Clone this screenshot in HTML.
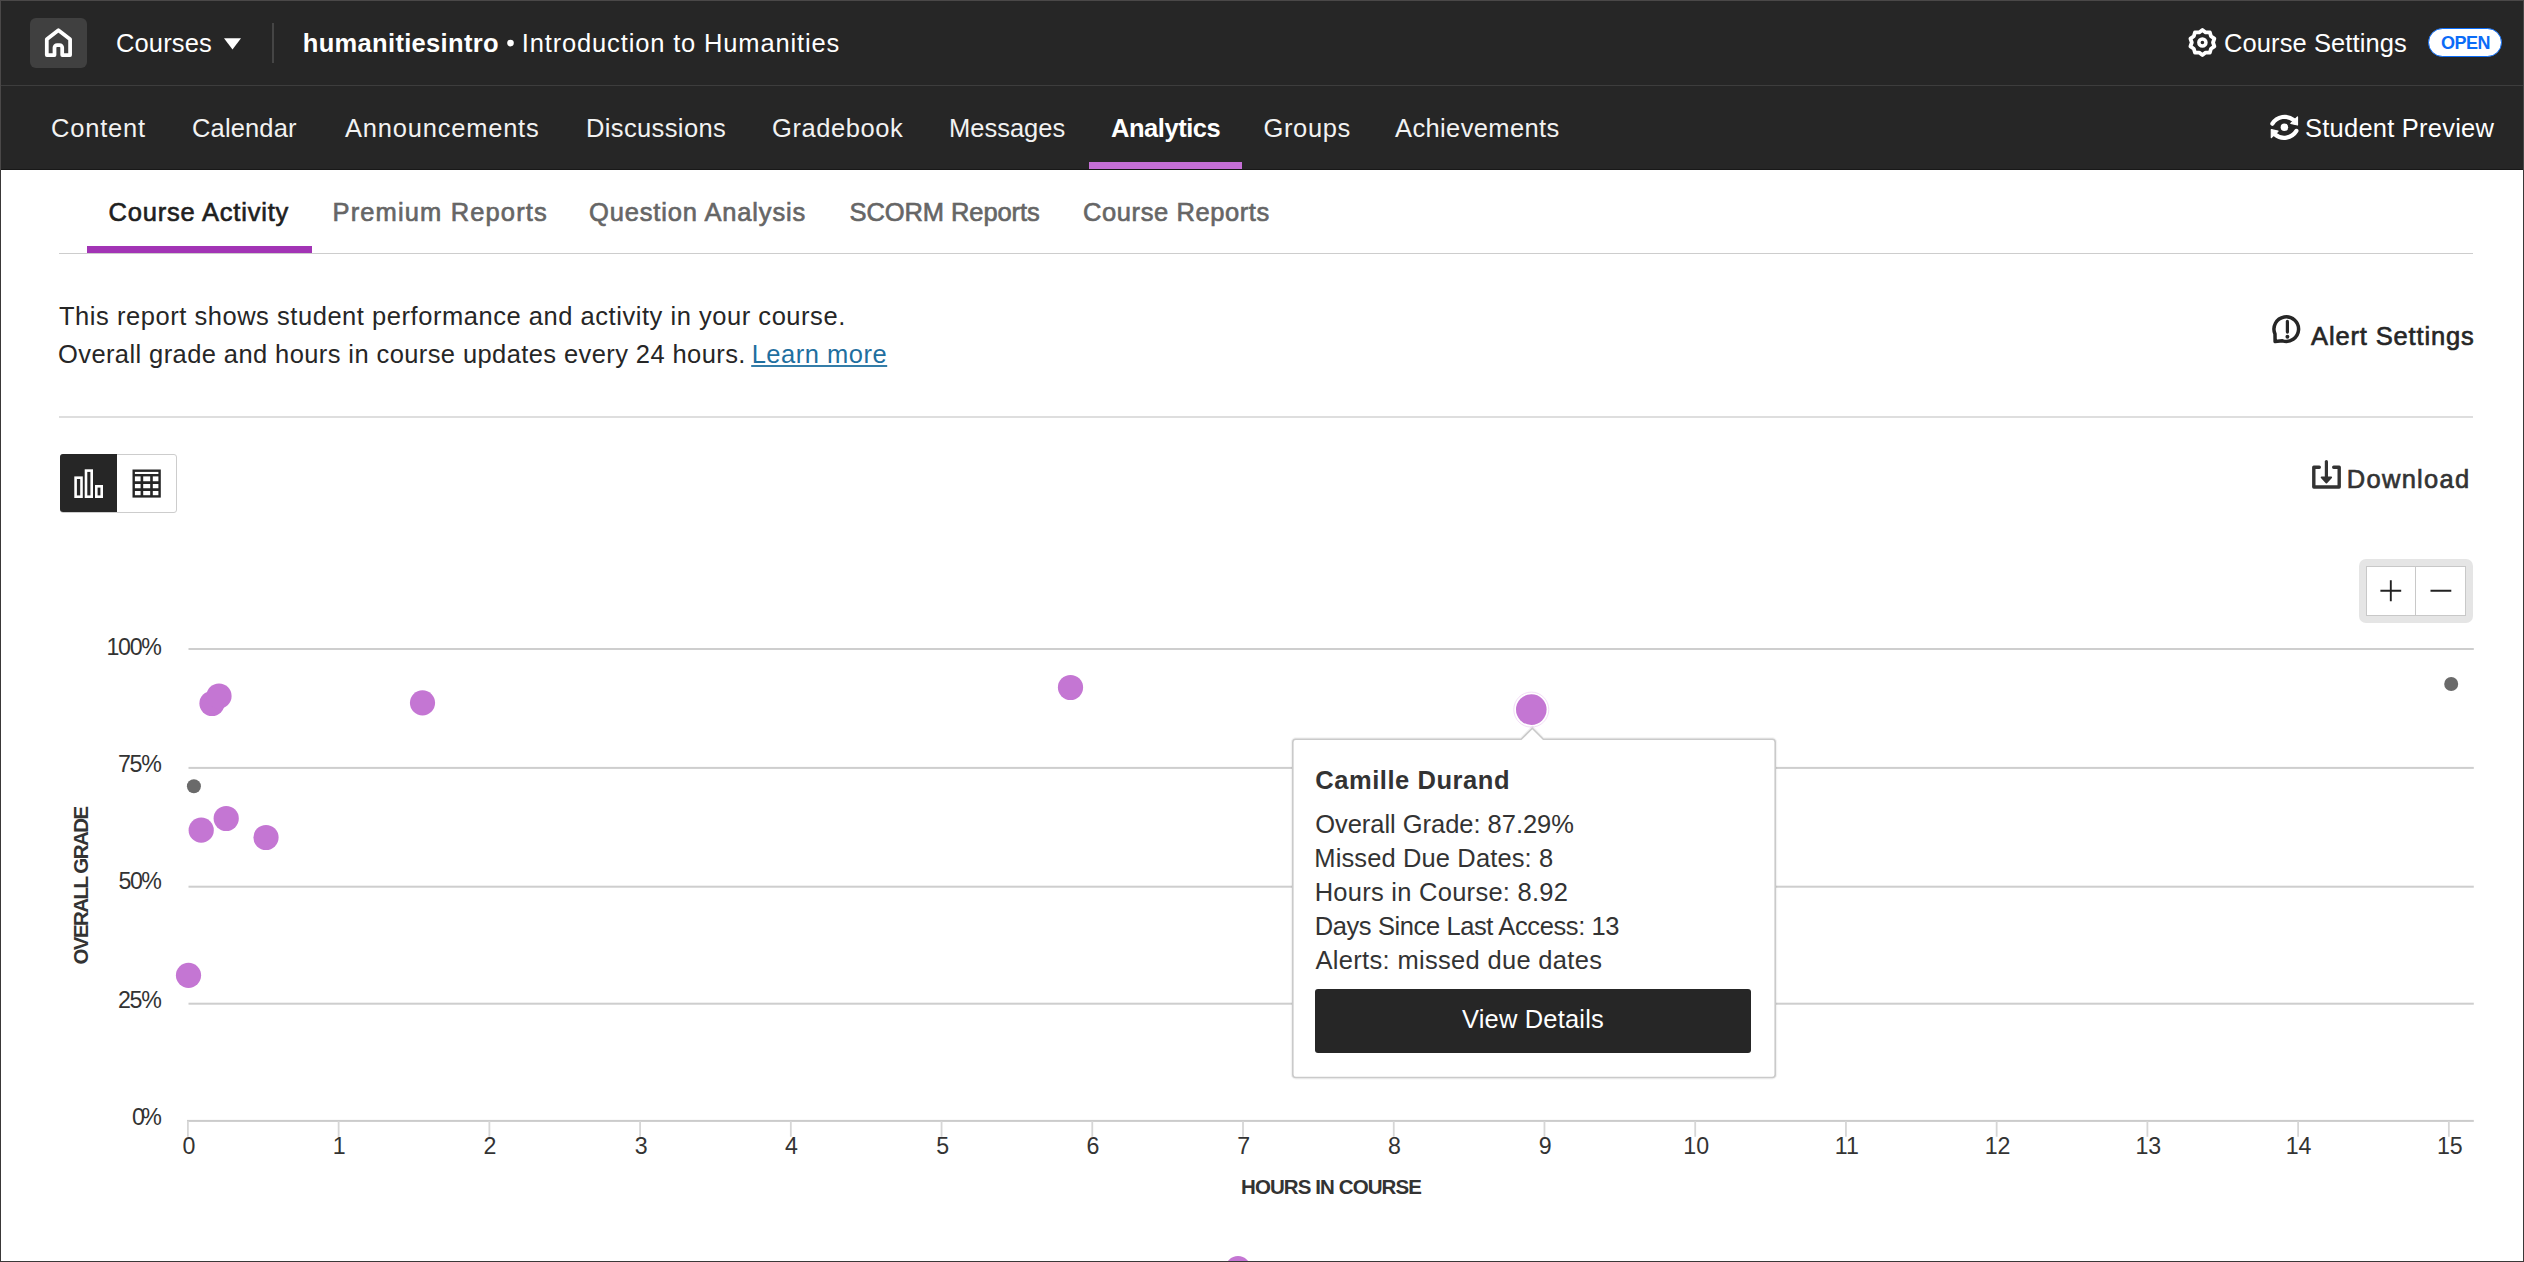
<!DOCTYPE html>
<html><head><meta charset="utf-8"><title>Course Activity</title>
<style>
html,body{margin:0;padding:0;background:#fff;}
body{width:2524px;height:1262px;overflow:hidden;font-family:"Liberation Sans",sans-serif;}
#page{position:relative;width:2524px;height:1262px;overflow:hidden;background:#fff;}
.t{position:absolute;white-space:nowrap;line-height:1;font-family:"Liberation Sans",sans-serif;}
.a{position:absolute;}
svg{position:absolute;overflow:visible;}

</style></head>
<body>
<div id="page">
<div class="a" style="left:0;top:0;width:2524px;height:170px;background:#262626"></div>
<div class="a" style="left:0;top:85px;width:2524px;height:1px;background:#3d3d3d"></div>
<div class="a" style="left:0;top:0;width:2524px;height:1px;background:#4a4848"></div>
<div class="a" style="left:0;top:169px;width:2524px;height:1px;background:#181818"></div>
<div class="a" style="left:0;top:0;width:1px;height:170px;background:#4a4848"></div>
<div class="a" style="left:30px;top:18px;width:57px;height:50px;border-radius:6px;background:#404040"></div>
<svg style="left:0;top:0" width="100" height="80"><path d="M54.5 55 H46.8 V39.3 L58.4 30.2 L70.1 39.3 V55 H62.2 V47.6 a2.6 2.6 0 0 0 -2.6 -2.6 h-2.5 a2.6 2.6 0 0 0 -2.6 2.6 Z" fill="none" stroke="#fff" stroke-width="3.75" stroke-linejoin="round"/></svg>
<svg style="left:224px;top:37.5px" width="17" height="12" viewBox="0 0 17 12"><path d="M0 0.3 H17 L8.5 11.4 Z" fill="#fff"/></svg>
<div class="a" style="left:272px;top:23px;width:2px;height:40px;background:#454545"></div>
<svg style="left:0;top:0" width="600" height="80"><circle cx="510.5" cy="43.1" r="3.3" fill="#fff"/></svg>
<svg style="left:0;top:0" width="2524" height="90"><path d="M2202.40 29.90 L2205.68 32.42 L2209.81 32.31 L2210.98 36.27 L2214.38 38.61 L2213.00 42.50 L2214.38 46.39 L2210.98 48.73 L2209.81 52.69 L2205.68 52.58 L2202.40 55.10 L2199.12 52.58 L2194.99 52.69 L2193.82 48.73 L2190.42 46.39 L2191.80 42.50 L2190.42 38.61 L2193.82 36.27 L2194.99 32.31 L2199.12 32.42 Z" fill="none" stroke="#fff" stroke-width="3.8" stroke-linejoin="round"/><circle cx="2202.4" cy="42.5" r="3.55" fill="none" stroke="#fff" stroke-width="3.5"/></svg>
<div class="a" style="left:2428px;top:28px;width:73.5px;height:28.5px;border-radius:15px;background:#fff;box-sizing:border-box;border:1.5px solid #0b6cf7"></div>
<svg style="left:0;top:0" width="2524" height="170"><g transform="translate(2284.4 127.3)"><path d="M-12.0 -3.6 A14.35 14.35 0 0 1 9.5 -7.1" fill="none" stroke="#fff" stroke-width="4.2" stroke-linecap="round"/><path d="M13.1 -10.3 V-2.3 L6.4 -3.9 Z" fill="#fff" stroke="#fff" stroke-width="1.2" stroke-linejoin="round"/><g transform="rotate(180)"><path d="M-12.0 -3.6 A14.35 14.35 0 0 1 9.5 -7.1" fill="none" stroke="#fff" stroke-width="4.2" stroke-linecap="round"/><path d="M13.1 -10.3 V-2.3 L6.4 -3.9 Z" fill="#fff" stroke="#fff" stroke-width="1.2" stroke-linejoin="round"/></g><circle cx="0" cy="0" r="3.75" fill="#fff"/></g></svg>
<div class="a" style="left:1089px;top:162px;width:153px;height:7px;background:#c56fd6"></div>
<div class="a" style="left:59px;top:253px;width:2414px;height:1px;background:#cdcdcd"></div>
<div class="a" style="left:87px;top:246px;width:225px;height:7px;background:#a234b5"></div>
<div class="a" style="left:59px;top:416px;width:2414px;height:2px;background:#dedede"></div>
<svg style="left:0;top:0" width="1000" height="400"><rect x="751.2" y="365.1" width="136" height="1.8" fill="#1f6f9f"/></svg>
<svg style="left:0;top:0" width="2524" height="400"><path d="M2275.1 341.6 L2275.0 334 A12.3 12.3 0 1 1 2282.5 340.8 Z" fill="none" stroke="#262626" stroke-width="3.5" stroke-linejoin="round"/><path d="M2287.4 321.4 V332.1" stroke="#262626" stroke-width="3.2" stroke-linecap="round"/><circle cx="2287.4" cy="336.7" r="1.95" fill="#262626"/></svg>
<div class="a" style="left:59.5px;top:454px;width:117px;height:58.6px;border-radius:3px;border:1px solid #cdcdcd;box-sizing:border-box;background:#fff"></div>
<div class="a" style="left:59.5px;top:454px;width:57.4px;height:58px;border-radius:3px 0 0 3px;background:#262626"></div>
<svg style="left:0;top:0" width="300" height="520"><g fill="none" stroke="#fff" stroke-width="2.6">
<rect x="75.6" y="477.7" width="5.9" height="19"/><rect x="86" y="470.6" width="5.7" height="26.1"/><rect x="96.3" y="486.3" width="5.4" height="10.4"/></g>
<g fill="none" stroke="#262626"><rect x="133.7" y="470.7" width="25.9" height="25.7" stroke-width="2.4"/>
<path d="M133 475.2 H160" stroke-width="2.4"/><path d="M133 482.6 H160 M133 489.7 H160" stroke-width="2.8"/><path d="M141.9 475 V497 M151.5 475 V497" stroke-width="2.6"/></g></svg>
<svg style="left:0;top:0" width="2524" height="520"><path d="M2319.3 467.2 H2313.8 V487 H2339.2 V467.2 H2333.7" fill="none" stroke="#333" stroke-width="3.4" stroke-linecap="round" stroke-linejoin="round"/>
<path d="M2326.4 461.6 V479" stroke="#333" stroke-width="3.2" stroke-linecap="round"/><path d="M2321.6 477.3 H2331.2 L2326.4 482.6 Z" fill="#333" stroke="#333" stroke-width="1.8" stroke-linejoin="round"/></svg>
<div class="a" style="left:2359px;top:559px;width:114px;height:63.5px;border-radius:7px;background:#e5e5e5"></div>
<div class="a" style="left:2366px;top:566px;width:100px;height:49.5px;background:#fff;border:1px solid #c8c8c8;box-sizing:border-box"></div>
<div class="a" style="left:2415px;top:566px;width:1px;height:49px;background:#c8c8c8"></div>
<svg style="left:0;top:0" width="2524" height="640"><path d="M2380.4 590.8 H2401.2 M2390.8 580.3 V601.3 M2430.5 590.8 H2451.3" stroke="#222" stroke-width="1.9" fill="none"/></svg>
<svg style="left:0;top:0" width="2524" height="1262">
<rect x="188.5" y="648.0" width="2285.3" height="2" fill="#cecece"/>
<rect x="188.5" y="766.9" width="2285.3" height="2" fill="#cecece"/>
<rect x="188.5" y="885.7" width="2285.3" height="2" fill="#cecece"/>
<rect x="188.5" y="1002.7" width="2285.3" height="2" fill="#cecece"/>
<rect x="187" y="1119.9" width="2286.8" height="2" fill="#cbcbcb"/>
<rect x="187.00" y="1121" width="1.8" height="15.8" fill="#d6d6d6"/>
<rect x="337.73" y="1121" width="1.8" height="15.8" fill="#d6d6d6"/>
<rect x="488.46" y="1121" width="1.8" height="15.8" fill="#d6d6d6"/>
<rect x="639.19" y="1121" width="1.8" height="15.8" fill="#d6d6d6"/>
<rect x="789.92" y="1121" width="1.8" height="15.8" fill="#d6d6d6"/>
<rect x="940.65" y="1121" width="1.8" height="15.8" fill="#d6d6d6"/>
<rect x="1091.38" y="1121" width="1.8" height="15.8" fill="#d6d6d6"/>
<rect x="1242.11" y="1121" width="1.8" height="15.8" fill="#d6d6d6"/>
<rect x="1392.84" y="1121" width="1.8" height="15.8" fill="#d6d6d6"/>
<rect x="1543.57" y="1121" width="1.8" height="15.8" fill="#d6d6d6"/>
<rect x="1694.30" y="1121" width="1.8" height="15.8" fill="#d6d6d6"/>
<rect x="1845.03" y="1121" width="1.8" height="15.8" fill="#d6d6d6"/>
<rect x="1995.76" y="1121" width="1.8" height="15.8" fill="#d6d6d6"/>
<rect x="2146.49" y="1121" width="1.8" height="15.8" fill="#d6d6d6"/>
<rect x="2297.22" y="1121" width="1.8" height="15.8" fill="#d6d6d6"/>
<rect x="2447.95" y="1121" width="1.8" height="15.8" fill="#d6d6d6"/>
<circle cx="212" cy="703.5" r="12.6" fill="#c476d3"/>
<circle cx="219" cy="696" r="12.6" fill="#c476d3"/>
<circle cx="422.5" cy="702.8" r="12.6" fill="#c476d3"/>
<circle cx="1070.5" cy="687.5" r="12.6" fill="#c476d3"/>
<circle cx="201.2" cy="830.2" r="12.6" fill="#c476d3"/>
<circle cx="226.2" cy="818.5" r="12.6" fill="#c476d3"/>
<circle cx="266" cy="837.5" r="12.6" fill="#c476d3"/>
<circle cx="188.5" cy="975.3" r="12.6" fill="#c476d3"/>
<circle cx="1238" cy="1268.7" r="12.6" fill="#c476d3"/>
<circle cx="193.9" cy="786.3" r="7" fill="#6a6a6a"/>
<circle cx="2451.2" cy="684" r="7" fill="#6a6a6a"/>
<circle cx="1531.3" cy="709.6" r="17.5" fill="#fff" stroke="#f0d9f5" stroke-width="0.9"/><circle cx="1531.3" cy="709.6" r="15.3" fill="#c476d3"/>
</svg>
<svg style="left:0;top:0" width="2524" height="1262"><path d="M1295.8 739.3 H1521.2 L1532.3 728.2 L1543.3 739.3 H1772.2 a3 3 0 0 1 3 3 V1074.5 a3 3 0 0 1 -3 3 H1295.8 a3 3 0 0 1 -3 -3 V742.3 a3 3 0 0 1 3 -3 Z" fill="none" stroke="rgba(0,0,0,0.05)" stroke-width="4"/><path d="M1295.8 739.3 H1521.2 L1532.3 728.2 L1543.3 739.3 H1772.2 a3 3 0 0 1 3 3 V1074.5 a3 3 0 0 1 -3 3 H1295.8 a3 3 0 0 1 -3 -3 V742.3 a3 3 0 0 1 3 -3 Z" fill="#fff" stroke="#cacaca" stroke-width="1.6" stroke-linejoin="round"/></svg>
<div class="a" style="left:1315px;top:989px;width:436px;height:64px;border-radius:3px;background:#262626"></div>
<div class="a" style="left:0;top:170px;width:1px;height:1092px;background:#3a3838"></div>
<div class="a" style="left:2523px;top:0;width:1px;height:170px;background:#4a4848"></div>
<div class="a" style="left:2523px;top:170px;width:1px;height:1092px;background:#3a3838"></div>
<div class="a" style="left:0;top:1261px;width:2524px;height:1px;background:#3a3838"></div>
<span class="t" style="left:116.00px;top:28px;line-height:30px;font-size:25.5px;font-weight:400;color:#fff;letter-spacing:0.133px;">Courses</span>
<span class="t" style="left:302.75px;top:28px;line-height:30px;font-size:25.5px;font-weight:700;color:#fff;letter-spacing:0.326px;">humanitiesintro</span>
<span class="t" style="left:521.80px;top:28px;line-height:30px;font-size:25.5px;font-weight:400;color:#fff;letter-spacing:0.848px;">Introduction to Humanities</span>
<span class="t" style="left:2224.00px;top:28px;line-height:30px;font-size:25.5px;font-weight:400;color:#fff;letter-spacing:0.095px;">Course Settings</span>
<span class="t" style="left:2441.00px;top:32px;line-height:22px;font-size:18px;font-weight:700;color:#0b6cf7;letter-spacing:-0.538px;">OPEN</span>
<span class="t" style="left:51.00px;top:113px;line-height:30px;font-size:25.5px;font-weight:400;color:#f2f2f2;letter-spacing:0.795px;">Content</span>
<span class="t" style="left:192.00px;top:113px;line-height:30px;font-size:25.5px;font-weight:400;color:#f2f2f2;letter-spacing:0.144px;">Calendar</span>
<span class="t" style="left:345.00px;top:113px;line-height:30px;font-size:25.5px;font-weight:400;color:#f2f2f2;letter-spacing:0.788px;">Announcements</span>
<span class="t" style="left:586.00px;top:113px;line-height:30px;font-size:25.5px;font-weight:400;color:#f2f2f2;letter-spacing:0.371px;">Discussions</span>
<span class="t" style="left:772.00px;top:113px;line-height:30px;font-size:25.5px;font-weight:400;color:#f2f2f2;letter-spacing:0.573px;">Gradebook</span>
<span class="t" style="left:949.00px;top:113px;line-height:30px;font-size:25.5px;font-weight:400;color:#f2f2f2;">Messages</span>
<span class="t" style="left:1263.50px;top:113px;line-height:30px;font-size:25.5px;font-weight:400;color:#f2f2f2;letter-spacing:0.626px;">Groups</span>
<span class="t" style="left:1395.00px;top:113px;line-height:30px;font-size:25.5px;font-weight:400;color:#f2f2f2;letter-spacing:0.372px;">Achievements</span>
<span class="t" style="left:1111.00px;top:113px;line-height:30px;font-size:25.5px;font-weight:700;color:#fff;letter-spacing:-0.462px;">Analytics</span>
<span class="t" style="left:2305.00px;top:113px;line-height:30px;font-size:25.5px;font-weight:400;color:#fff;letter-spacing:0.231px;">Student Preview</span>
<span class="t" style="left:108.50px;top:197px;line-height:30px;font-size:25.5px;font-weight:400;color:#1f1f1f;letter-spacing:0.800px;-webkit-text-stroke:0.65px currentColor;">Course Activity</span>
<span class="t" style="left:332.50px;top:197px;line-height:30px;font-size:25.5px;font-weight:400;color:#666;letter-spacing:1.133px;-webkit-text-stroke:0.65px currentColor;">Premium Reports</span>
<span class="t" style="left:589.00px;top:197px;line-height:30px;font-size:25.5px;font-weight:400;color:#666;letter-spacing:0.853px;-webkit-text-stroke:0.65px currentColor;">Question Analysis</span>
<span class="t" style="left:849.50px;top:197px;line-height:30px;font-size:25.5px;font-weight:400;color:#666;letter-spacing:-0.086px;-webkit-text-stroke:0.65px currentColor;">SCORM Reports</span>
<span class="t" style="left:1083.00px;top:197px;line-height:30px;font-size:25.5px;font-weight:400;color:#666;letter-spacing:0.590px;-webkit-text-stroke:0.65px currentColor;">Course Reports</span>
<span class="t" style="left:59.00px;top:301px;line-height:30px;font-size:25.5px;font-weight:400;color:#262626;letter-spacing:0.539px;">This report shows student performance and activity in your course.</span>
<span class="t" style="left:58.00px;top:339px;line-height:30px;font-size:25.5px;font-weight:400;color:#262626;letter-spacing:0.403px;">Overall grade and hours in course updates every 24 hours.</span>
<span class="t" style="left:751.70px;top:339px;line-height:30px;font-size:25.5px;font-weight:400;color:#1f6f9f;letter-spacing:0.498px;">Learn more</span>
<span class="t" style="left:2311.10px;top:321px;line-height:30px;font-size:25.5px;font-weight:400;color:#262626;letter-spacing:0.846px;-webkit-text-stroke:0.65px currentColor;">Alert Settings</span>
<span class="t" style="left:2346.80px;top:464px;line-height:30px;font-size:25.5px;font-weight:400;color:#333;letter-spacing:1.282px;-webkit-text-stroke:0.65px currentColor;">Download</span>
<span class="t" style="left:106.50px;top:633px;line-height:28px;font-size:23.2px;font-weight:400;color:#333;letter-spacing:-1.329px;">100%</span>
<span class="t" style="left:118.00px;top:750px;line-height:28px;font-size:23.2px;font-weight:400;color:#333;letter-spacing:-1.296px;">75%</span>
<span class="t" style="left:118.60px;top:867px;line-height:28px;font-size:23.2px;font-weight:400;color:#333;letter-spacing:-1.596px;">50%</span>
<span class="t" style="left:118.00px;top:986px;line-height:28px;font-size:23.2px;font-weight:400;color:#333;letter-spacing:-1.296px;">25%</span>
<span class="t" style="left:131.90px;top:1103px;line-height:28px;font-size:23.2px;font-weight:400;color:#333;letter-spacing:-3.596px;">0%</span>
<span class="t" style="left:182.60px;top:1132px;line-height:28px;font-size:23.2px;font-weight:400;color:#333;">0</span>
<span class="t" style="left:332.83px;top:1132px;line-height:28px;font-size:23.2px;font-weight:400;color:#333;">1</span>
<span class="t" style="left:483.56px;top:1132px;line-height:28px;font-size:23.2px;font-weight:400;color:#333;">2</span>
<span class="t" style="left:634.79px;top:1132px;line-height:28px;font-size:23.2px;font-weight:400;color:#333;">3</span>
<span class="t" style="left:785.02px;top:1132px;line-height:28px;font-size:23.2px;font-weight:400;color:#333;">4</span>
<span class="t" style="left:936.25px;top:1132px;line-height:28px;font-size:23.2px;font-weight:400;color:#333;">5</span>
<span class="t" style="left:1086.48px;top:1132px;line-height:28px;font-size:23.2px;font-weight:400;color:#333;">6</span>
<span class="t" style="left:1237.21px;top:1132px;line-height:28px;font-size:23.2px;font-weight:400;color:#333;">7</span>
<span class="t" style="left:1387.94px;top:1132px;line-height:28px;font-size:23.2px;font-weight:400;color:#333;">8</span>
<span class="t" style="left:1538.67px;top:1132px;line-height:28px;font-size:23.2px;font-weight:400;color:#333;">9</span>
<span class="t" style="left:1683.25px;top:1132px;line-height:28px;font-size:23.2px;font-weight:400;color:#333;">10</span>
<span class="t" style="left:1834.84px;top:1132px;line-height:28px;font-size:23.2px;font-weight:400;color:#333;">11</span>
<span class="t" style="left:1984.71px;top:1132px;line-height:28px;font-size:23.2px;font-weight:400;color:#333;">12</span>
<span class="t" style="left:2135.44px;top:1132px;line-height:28px;font-size:23.2px;font-weight:400;color:#333;">13</span>
<span class="t" style="left:2285.67px;top:1132px;line-height:28px;font-size:23.2px;font-weight:400;color:#333;">14</span>
<span class="t" style="left:2436.90px;top:1132px;line-height:28px;font-size:23.2px;font-weight:400;color:#333;">15</span>
<span class="t" style="left:1241.00px;top:1174px;line-height:25px;font-size:20.5px;font-weight:700;color:#333;letter-spacing:-0.908px;">HOURS IN COURSE</span>
<div class="a" style="left:81.3px;top:884.85px;width:0;height:0"><div style="position:absolute;white-space:nowrap;transform:translate(-50%,-50%) rotate(-90deg);font:700 20.5px/1 'Liberation Sans',sans-serif;color:#333;letter-spacing:-1.558px;margin-top:0.78px">OVERALL GRADE</div></div>
<span class="t" style="left:1315.20px;top:765px;line-height:30px;font-size:25.5px;font-weight:700;color:#333;letter-spacing:0.564px;">Camille Durand</span>
<span class="t" style="left:1315.20px;top:809px;line-height:30px;font-size:25.5px;font-weight:400;color:#333;letter-spacing:-0.033px;">Overall Grade: 87.29%</span>
<span class="t" style="left:1314.30px;top:843px;line-height:30px;font-size:25.5px;font-weight:400;color:#333;letter-spacing:0.122px;">Missed Due Dates: 8</span>
<span class="t" style="left:1314.70px;top:877px;line-height:30px;font-size:25.5px;font-weight:400;color:#333;letter-spacing:0.260px;">Hours in Course: 8.92</span>
<span class="t" style="left:1314.70px;top:911px;line-height:30px;font-size:25.5px;font-weight:400;color:#333;letter-spacing:-0.393px;">Days Since Last Access: 13</span>
<span class="t" style="left:1315.50px;top:945px;line-height:30px;font-size:25.5px;font-weight:400;color:#333;letter-spacing:0.317px;">Alerts: missed due dates</span>
<span class="t" style="left:1462.00px;top:1004px;line-height:30px;font-size:25.5px;font-weight:400;color:#fff;letter-spacing:0.174px;">View Details</span>
</div>
</body></html>
